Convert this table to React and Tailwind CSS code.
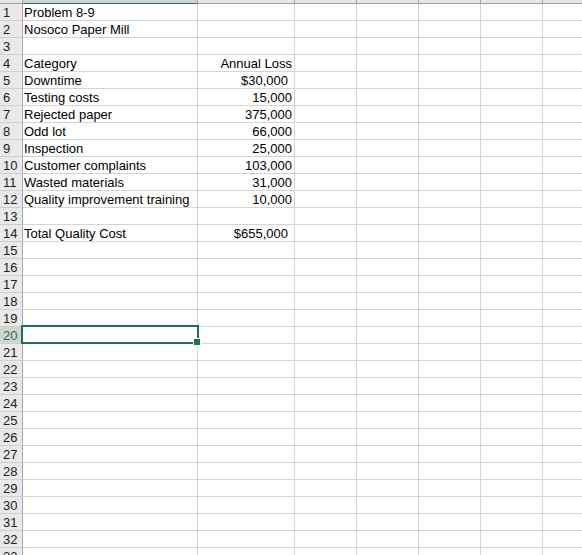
import React from "react";

const rows = [
  ["Problem 8-9", ""],
  ["Nosoco Paper Mill", ""],
  ["", ""],
  ["Category", "Annual Loss"],
  ["Downtime", "$30,000", true],
  ["Testing costs", "15,000"],
  ["Rejected paper", "375,000"],
  ["Odd lot", "66,000"],
  ["Inspection", "25,000"],
  ["Customer complaints", "103,000"],
  ["Wasted materials", "31,000"],
  ["Quality improvement training", "10,000"],
  ["", ""],
  ["Total Quality Cost", "$655,000", true],
];

const SELECTED = 20;

const Row = ({ n, a, b, acct }) => {
  const sel = n === SELECTED;
  return (
    <div className="flex h-[17px] shrink-0">
      <div
        className={`w-[23px] shrink-0 border-r border-b border-r-[#a6a6a6] border-b-[#cfcfcf] pl-[3px] leading-[17px] ${
          sel ? "bg-[#d3d3d3] text-[#217346]" : "bg-[#e9e9e9] text-[#222]"
        }`}
      >
        {n}
      </div>
      <div className="relative w-[175px] shrink-0 border-r border-b border-[#d4d4d4] pl-[1px] leading-[17px] whitespace-nowrap">
        {a}
        {sel && (
          <div className="absolute -left-[2px] -top-[2px] z-10 h-[19px] w-[178px] border-2 border-[#217346]">
            <div className="absolute -right-[3px] -bottom-[3px] h-[6px] w-[6px] bg-[#217346] outline outline-1 outline-white" />
          </div>
        )}
      </div>
      <div
        className={`w-[97px] shrink-0 border-r border-b border-[#d4d4d4] text-right leading-[17px] whitespace-nowrap ${
          acct ? "pr-[6px]" : "pr-[2px]"
        }`}
      >
        {b}
      </div>
      {[0, 1, 2, 3, 4].map((i) => (
        <div key={i} className="w-[62px] shrink-0 border-r border-b border-[#d4d4d4]" />
      ))}
    </div>
  );
};

export default function App() {
  const all = Array.from({ length: 34 }, (_, i) => {
    const r = rows[i] || ["", ""];
    return { n: i + 1, a: r[0], b: r[1], acct: r[2] };
  });
  return (
    <div className="h-[555px] w-[582px] overflow-hidden bg-white font-['Liberation_Sans',Arial,sans-serif] text-[13px] text-black">
      <div className="flex h-[4px] shrink-0">
        <div className="w-[23px] shrink-0 border-r border-b border-r-[#a6a6a6] border-b-[#9b9b9b] bg-[#e6e6e6]" />
        <div className="w-[175px] shrink-0 border-r border-b border-r-[#a6a6a6] border-b-[#217346] bg-[#d3d3d3]" />
        <div className="w-[97px] shrink-0 border-r border-b border-r-[#a6a6a6] border-b-[#9b9b9b] bg-[#e6e6e6]" />
        {[0, 1, 2, 3, 4].map((i) => (
          <div key={i} className="w-[62px] shrink-0 border-r border-b border-r-[#a6a6a6] border-b-[#9b9b9b] bg-[#e6e6e6]" />
        ))}
      </div>
      {all.map((r) => (
        <Row key={r.n} {...r} />
      ))}
    </div>
  );
}
